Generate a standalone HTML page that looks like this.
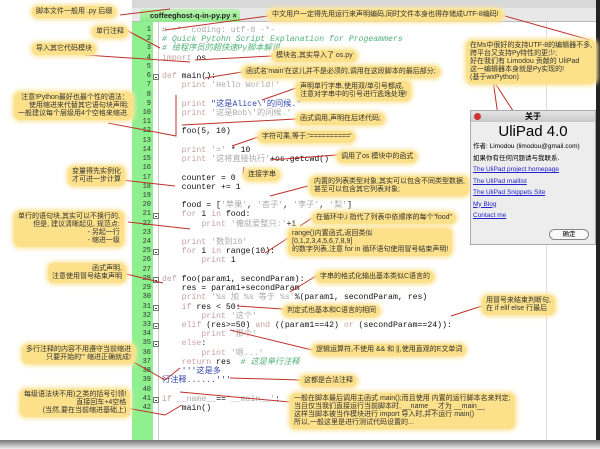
<!DOCTYPE html>
<html><head><meta charset="utf-8"><style>
*{margin:0;padding:0;box-sizing:border-box}
body{width:600px;height:449px;overflow:hidden;background:#fff;position:relative;font-family:"Liberation Sans","Noto Sans CJK SC",sans-serif}
.a{position:absolute}
.c{position:absolute;background:#fce18a;border-radius:6px;box-shadow:0 0 4px 2px #fbe6a0;font-size:7px;line-height:8px;color:#333;padding:2px 4px;white-space:nowrap;z-index:5}
.r{text-align:right}
.code{position:absolute;left:0;font-family:"Liberation Mono","Noto Sans CJK SC",monospace;font-size:8.2px;line-height:9.22px;white-space:pre;color:#111}
.k{color:#c4a2a2}.s{color:#aaa}.g{color:#4fb07a;font-style:italic}.b{color:#3344aa}
.ln{position:absolute;left:132px;width:19px;text-align:right;font-family:"Liberation Mono",monospace;font-size:7px;line-height:9.22px;color:#333}
.f{position:absolute;left:153px;width:6px;height:6px;border:1px solid #777;background:#fff;z-index:2}
.f:after{content:"";position:absolute;left:1px;top:2px;width:2px;height:1px;background:#444}
a{color:#2222cc;text-decoration:underline}
</style></head><body>
<div class="a" style="left:132px;top:0;width:466px;height:8px;background:#d8d8d8"></div>
<div class="a" style="left:132px;top:8px;width:466px;height:14px;background:#e8e8e8;border-bottom:1px solid #bbb"></div>
<div class="a" style="left:140px;top:9px;width:100px;height:13px;background:linear-gradient(#b8f5b0,#8ee88a);border-radius:3px 3px 0 0;font-size:7.5px;font-weight:bold;line-height:13px;padding-left:10px;color:#222">coffeeghost-q-in-py.py ×</div>
<div class="a" style="left:132px;top:22px;width:21px;height:418px;background:#8ff08f"></div>
<div class="a" style="left:158px;top:22px;width:1px;height:418px;background:#ccc"></div>
<div class="a" style="left:546px;top:22px;width:1px;height:418px;background:#ddd"></div>
<div class="a" style="left:596px;top:0;width:4px;height:449px;background:#222"></div>
<div class="a" style="left:0;top:440px;width:600px;height:9px;background:linear-gradient(#777,#eee)"></div>
<div class="f" style="top:74px"></div><div class="f" style="top:213px"></div><div class="f" style="top:249px"></div><div class="f" style="top:277px"></div><div class="f" style="top:305px"></div><div class="f" style="top:323px"></div><div class="f" style="top:341px"></div><div class="f" style="top:397px"></div>
<div class="ln" style="top:26px">1<br>2<br>3<br>4<br>5<br>6<br>7<br>8<br>9<br>10<br>11<br>12<br>13<br>14<br>15<br>16<br>17<br>18<br>19<br>20<br>21<br>22<br>23<br>24<br>25<br>26<br>27<br>28<br>29<br>30<br>31<br>32<br>33<br>34<br>35<br>36<br>37<br>38<br>39<br>40<br>41<br>42</div>
<div class="code" style="left:162px;top:26px"><span class="s"># -*- coding: utf-8 -*-</span>
<span class="g"># Quick Pytohn Script Explanation for Progeammers</span>
<span class="g"># 给程序员的超快速Py脚本解说</span>
<span class="k">import</span> os

<span class="k">def</span> main():
    <span class="k">print</span> <span class="s">'Hello World!'</span>

    <span class="k">print</span> <span class="b">"这是Alice\'的问候."</span>
    <span class="k">print</span> <span class="s">'这是Bob\'的问候.'</span>

    foo(5, 10)

    <span class="k">print</span> <span class="s">'='</span> * 10
    <span class="k">print</span> <span class="s">'这将直接执行'</span>+os.getcwd()

    counter = 0
    counter += 1

    food = [<span class="s">'苹果'</span>, <span class="s">'杏子'</span>, <span class="s">'李子'</span>, <span class="s">'梨'</span>]
    <span class="k">for</span> i <span class="k">in</span> food:
        <span class="k">print</span> <span class="s">'俺就爱整只:'</span>+i

    <span class="k">print</span> <span class="s">'数到10'</span>
    <span class="k">for</span> i <span class="k">in</span> range(10):
        <span class="k">print</span> i

<span class="k">def</span> foo(param1, secondParam):
    res = param1+secondParam
    <span class="k">print</span> <span class="s">'%s 加 %s 等于 %s'</span>%(param1, secondParam, res)
    <span class="k">if</span> res &lt; 50:
        <span class="k">print</span> <span class="s">'这个'</span>
    <span class="k">elif</span> (res&gt;=50) <span class="k">and</span> ((param1==42) <span class="k">or</span> (secondParam==24)):
        <span class="k">print</span> <span class="s">'那个'</span>
    <span class="k">else</span>:
        <span class="k">print</span> <span class="s">'嗯...'</span>
    <span class="k">return</span> res  <span class="g"># 这是单行注释</span>
    <span class="b">'''这是多</span>
<span class="b">行注释......'''</span>

<span class="k">if</span> <span class="s">__name__</span>==<span class="s">'__main__'</span>:
    main()</div>
<div class="a" style="left:470px;top:110px;width:126px;height:135px;background:#ededed;border:1px solid #aaa;z-index:6">
 <div style="height:11px;background:linear-gradient(#e4e4e4,#c8c8c8);font-size:8px;text-align:center;line-height:11px;font-weight:bold">关于</div>
 <div style="position:absolute;left:3px;top:2px;width:7px;height:7px;border-radius:50%;background:#c33"></div>
 <div style="font-size:15px;text-align:center;margin-top:1px;line-height:18px">UliPad 4.0</div>
 <div style="font-size:6.5px;line-height:11.5px;padding-left:2px">作者: Limodou (limodou@gmail.com)<br>如果你有任何问题请与我联系.<br><a>The UliPad project homepage</a><br><a>The UliPad maillist</a><br><a>The UliPad Snippets Site</a><br><a>My Blog</a><br><a>Contact me</a></div>
 <div style="position:absolute;left:78px;top:118px;width:40px;height:11px;border:1px solid #888;border-radius:6px;background:#fafafa;font-size:6.5px;text-align:center;line-height:9px">确定</div>
</div>
<svg class="a" style="left:0;top:0;z-index:4" width="600" height="449" fill="none" stroke="#c0302a" stroke-width="1">
<path d="M120 15 L170 9"/><path d="M505 16 L590 40"/><path d="M268 16 L165 30"/>
<path d="M128 31 L160 48"/><path d="M85 55 L190 62"/><path d="M272 56 L195 60"/>
<path d="M242 72 L205 78"/><path d="M296 88 L262 100"/><path d="M296 119 L182 125"/>
<path d="M108 123 L176 136 L176 95"/><path d="M258 137 L232 146"/><path d="M337 155 L270 160"/>
<path d="M243 174 L244 167"/><path d="M122 180 L175 186"/><path d="M308 186 L270 196"/>
<path d="M128 222 L190 229"/><path d="M312 218 L300 226"/><path d="M288 238 L265 253"/>
<path d="M118 272 L163 283"/><path d="M316 276 L290 292"/><path d="M283 309 L237 306"/>
<path d="M482 306 L451 316"/><path d="M312 350 L230 330"/><path d="M130 360 L165 380 L180 368"/>
<path d="M300 380 L230 378"/><path d="M110 405 L165 415 L182 405"/><path d="M290 402 L180 392"/>
<path d="M500 130 L493 80 M493 80 L530 137"/>
</svg>
<div class="c" style="left:32px;top:6px">脚本文件一般用 .py 后缀</div>
<div class="c" style="left:92px;top:26px">单行注释</div>
<div class="c" style="left:32px;top:43px">导入其它代码模块</div>
<div class="c r" style="left:14px;top:92px">注意!Python最好也最个性的语法：<br>使用缩进来代替其它语句块声明;<br>一般建议每个层级用4个空格来缩进.</div>
<div class="c r" style="left:68px;top:166px">变量得先实例化<br>才可进一步计算</div>
<div class="c r" style="left:14px;top:211px">单行的语句块,其实可以不换行的,<br>但是, 建议清晰起见, 规范点:<br>- 另起一行<br>- 缩进一级</div>
<div class="c r" style="left:48px;top:263px">函式声明,<br>注意使用冒号结束声明</div>
<div class="c r" style="left:22px;top:344px">多行注释的内容不用遵守当前缩进<br>只要开始的''' 缩进正确就成!</div>
<div class="c r" style="left:20px;top:389px">每级语法块不用)之类的括号引领!<br>直接回车+4空格<br>(当然,要在当前缩进基础上)</div>
<div class="c" style="left:268px;top:9px">中文用户一定得先用运行来声明编码,同时文件本身也得存储成UTF-8编码!</div>
<div class="c" style="left:466px;top:40px">在Ms中很好的支持UTF-8的编辑器不多,<br>跨平台又支持Py特性的更少;<br>好在我们有 Limodou 贡献的 UliPad<br>这一编辑器本身就是Py实现的!<br>(基于wxPython)</div>
<div class="c" style="left:272px;top:50px">模块名,其实导入了 os.py</div>
<div class="c" style="left:242px;top:66px">函式名'main'在这儿并不是必须的,调用在这段脚本的最后部分;</div>
<div class="c" style="left:296px;top:81px">声明单行字串,使用双/单引号都成,<br>注意对字串中的引号进行逃逸处理!</div>
<div class="c" style="left:296px;top:113px">函式调用,声明在后述代码;</div>
<div class="c" style="left:258px;top:131px">字符可乘,等于:'=========='</div>
<div class="c" style="left:337px;top:151px">调用了os 模块中的函式</div>
<div class="c" style="left:244px;top:169px">连接字串</div>
<div class="c" style="left:310px;top:176px">内置的列表类型对象,其实可以包含不同类型数据,<br>甚至可以包含其它列表对象;</div>
<div class="c" style="left:312px;top:212px">在循环中,i 指代了列表中依顺序的每个"food"</div>
<div class="c" style="left:288px;top:228px">range()内置函式,返回类似<br>[0,1,2,3,4,5,6,7,8,9]<br>的数字列表,注意 for in 循环语句使用冒号结束声明!</div>
<div class="c" style="left:316px;top:271px">字串的格式化输出基本类似C语言的</div>
<div class="c" style="left:283px;top:305px">判定式也基本和C语言的相同</div>
<div class="c" style="left:482px;top:295px">用冒号来结束判断句,<br>在 if elif else 行最后</div>
<div class="c" style="left:312px;top:344px">逻辑运算符,不使用 &amp;&amp; 和 ||,使用直观的E文单词</div>
<div class="c" style="left:300px;top:375px">这都是合法注释</div>
<div class="c" style="left:290px;top:393px">一般在脚本最后调用主函式 main();而且使用 内置的运行脚本名来判定;<br>当且仅当我们直接运行当前脚本时, __name__ 才为 __main__<br>这样当脚本被当作模块进行 import 导入时,并不运行 main()<br>所以,一般这里是进行测试代码设置的...</div>
</body></html>
